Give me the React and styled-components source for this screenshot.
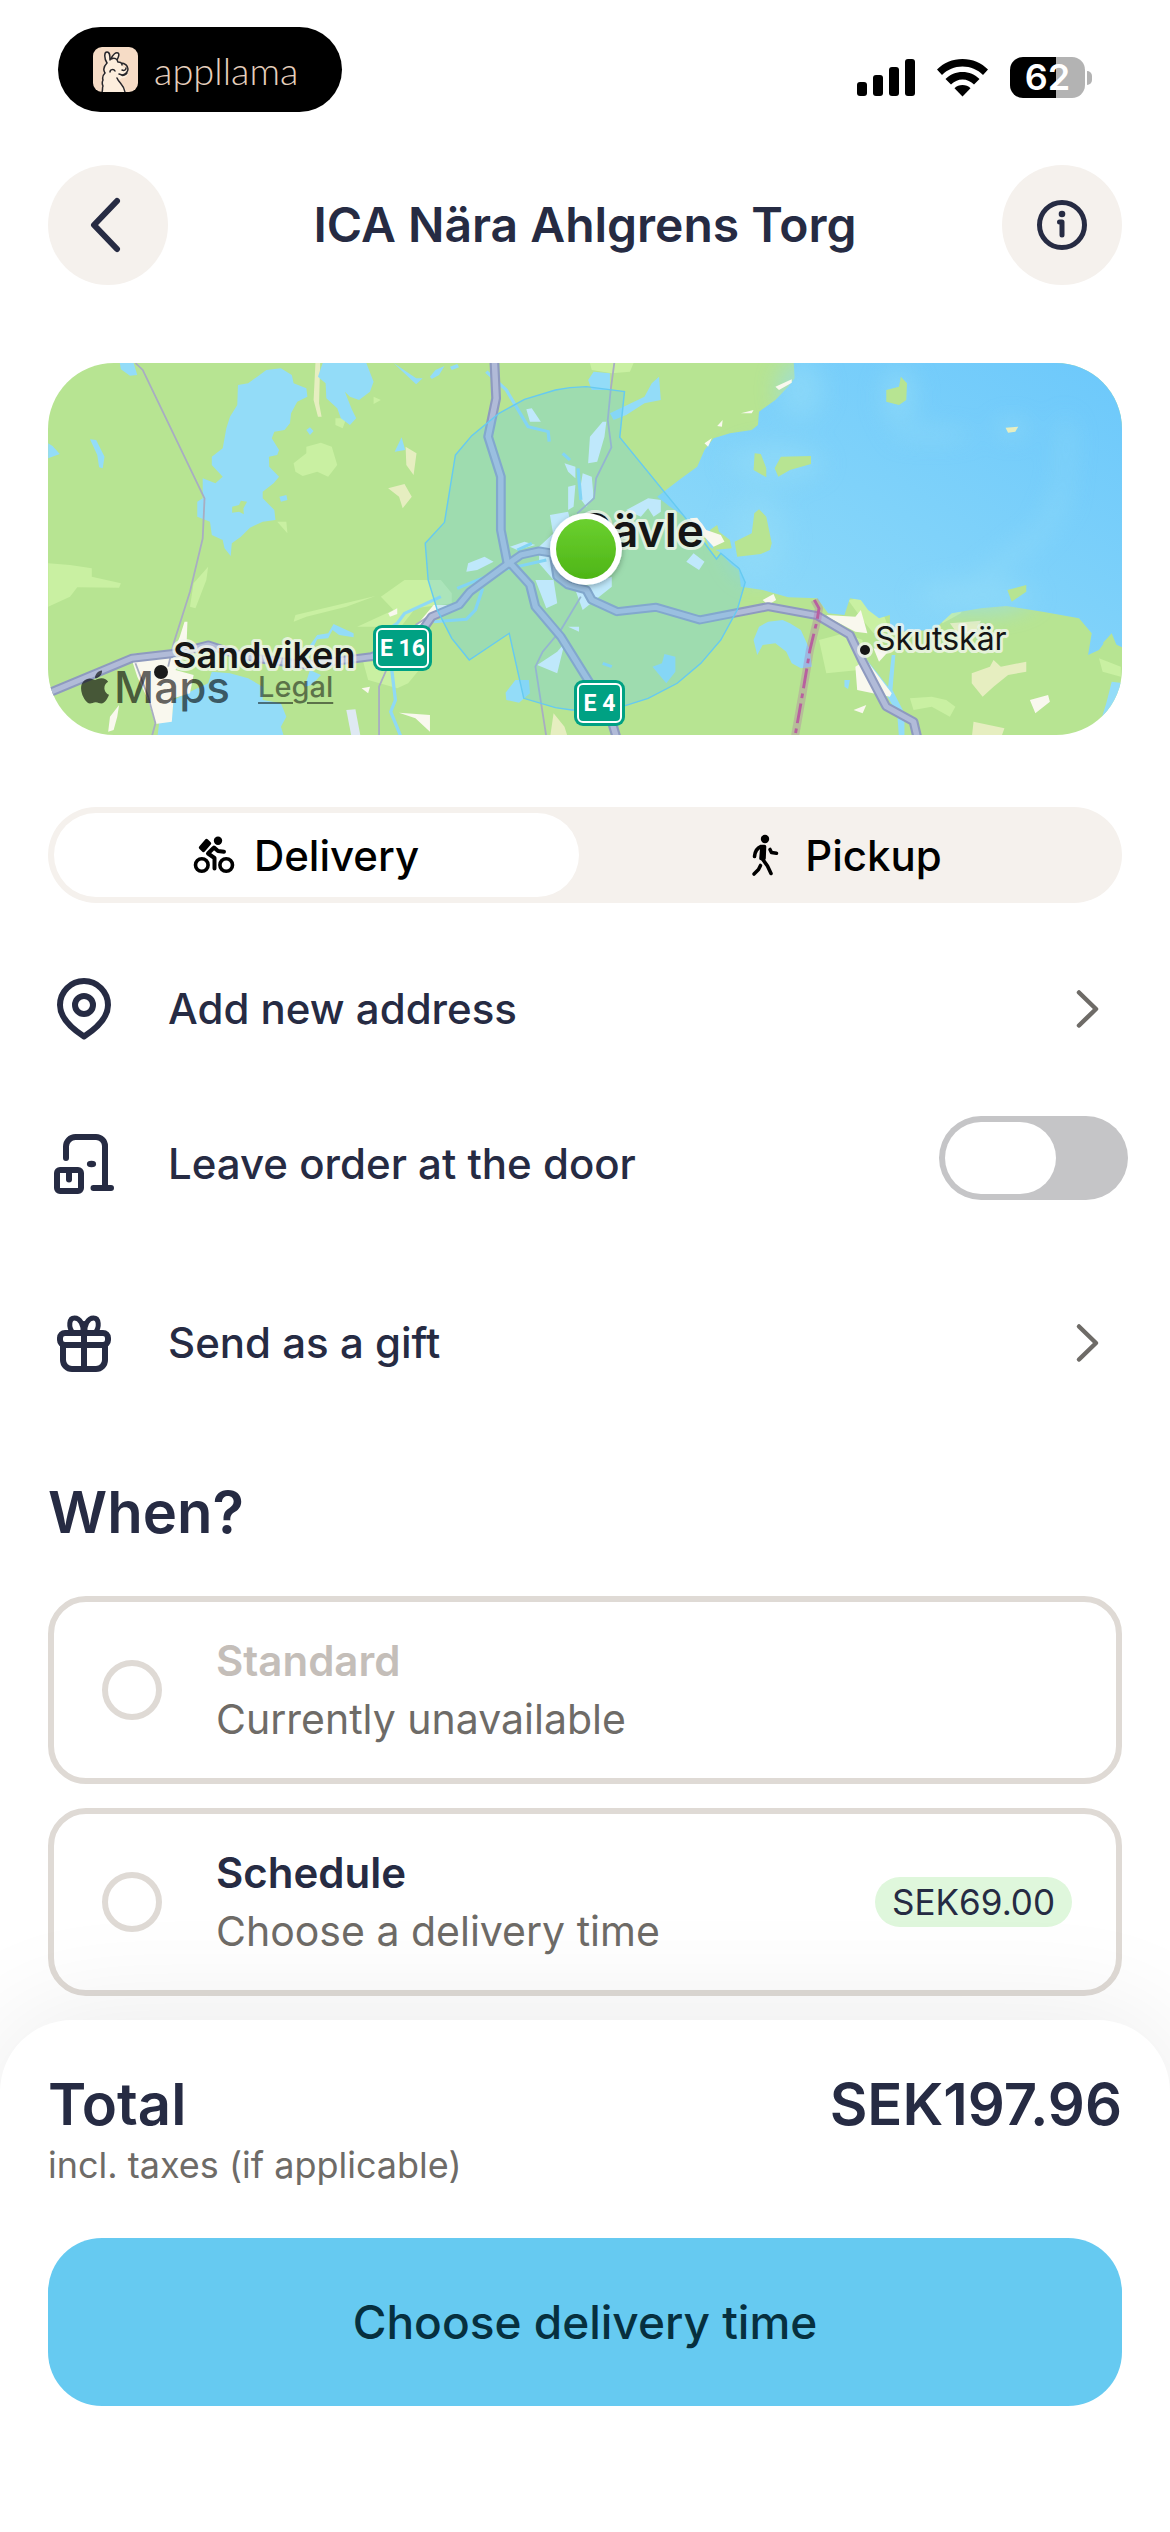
import React, { useState } from "react";
import styled, { createGlobalStyle } from "styled-components";
import { FaApple } from "react-icons/fa";

const GlobalStyles = createGlobalStyle`
  *,
  *::before,
  *::after {
    box-sizing: border-box;
  }
  body {
    margin: 0;
    background: #ffffff;
    color: #262b43;
    font-family: Inter, "Liberation Sans", sans-serif;
  }
  button,
  input {
    margin: 0;
    font: inherit;
    color: inherit;
  }
  button {
    border: none;
    padding: 0;
    background: none;
    cursor: pointer;
  }
`;

const Page = styled.div`
  min-height: 100vh;
  display: flex;
  flex-direction: column;
`;

const StatusBar = styled.div`
  display: flex;
  justify-content: space-between;
  align-items: center;
  padding: 27px 78px 0 58px;
`;

const Island = styled.div`
  display: flex;
  align-items: center;
  gap: 16px;
  width: 284px;
  height: 85px;
  padding-left: 35px;
  border-radius: 43px;
  background: #000000;
  color: #e6cfbd;
  font-family: Lato, sans-serif;
  font-weight: 300;
  font-size: 38px;
  line-height: 44px;
`;

const StatusIcons = styled.div`
  display: flex;
  align-items: center;
  gap: 22px;
  padding-top: 16px;
`;

const Battery = styled.div`
  display: flex;
  align-items: center;
  gap: 2px;
  &::after {
    content: "";
    width: 5px;
    height: 14px;
    border-radius: 0 6px 6px 0;
    background: #b3b3b3;
  }
  span {
    width: 75px;
    border-radius: 13px;
    background: linear-gradient(to right, #000000 62%, #b3b3b3 62%);
    color: white;
    font-weight: 600;
    font-size: 36px;
    line-height: 41px;
    text-align: center;
  }
`;

const Content = styled.main`
  display: flex;
  flex-direction: column;
  padding: 53px 48px 24px;
`;

const Header = styled.header`
  display: flex;
  justify-content: space-between;
  align-items: center;
  h1 {
    margin: 0;
    font-weight: 600;
    font-size: 48px;
    line-height: 60px;
  }
`;

const RoundButton = styled.button`
  display: flex;
  align-items: center;
  justify-content: center;
  width: 120px;
  height: 120px;
  border-radius: 50%;
  background: #f5f1ed;
`;

const MapCard = styled.section`
  position: relative;
  height: 372px;
  margin-top: 78px;
  border-radius: 66px;
  overflow: hidden;
  > svg {
    display: block;
    width: 100%;
    height: 100%;
  }
`;

const MapCredits = styled.div`
  position: absolute;
  left: 28px;
  bottom: 20px;
  display: flex;
  align-items: center;
  color: rgba(0, 0, 0, 0.62);
  font-weight: 500;
  font-size: 44px;
  line-height: 56px;
  a {
    margin-left: 28px;
    color: rgba(0, 0, 0, 0.5);
    font-weight: 500;
    font-size: 29px;
    text-underline-offset: 5px;
  }
`;

const Segmented = styled.div`
  display: flex;
  gap: 12px;
  margin-top: 72px;
  padding: 6px;
  border-radius: 48px;
  background: #f5f1ed;
`;

const Segment = styled.button`
  flex: 1;
  display: flex;
  align-items: center;
  justify-content: center;
  gap: 16px;
  height: 84px;
  padding-right: 24px;
  border-radius: 42px;
  background: ${(props) => (props.$active ? "#ffffff" : "transparent")};
  color: #000000;
  font-weight: 500;
  font-size: 42px;
`;

const OptionList = styled.div`
  display: flex;
  flex-direction: column;
  gap: 71px;
  padding-top: 70px;
`;

const OptionRow = styled.button`
  display: flex;
  align-items: flex-end;
  gap: 48px;
  width: 100%;
  text-align: left;
  font-weight: 500;
  font-size: 42px;
  line-height: 72px;
  svg {
    flex: none;
  }
  span {
    flex: 1;
  }
`;

const ToggleRow = styled(OptionRow)`
  margin-bottom: 36px;
  cursor: pointer;
`;

const Toggle = styled.input`
  appearance: none;
  width: 189px;
  height: 84px;
  margin-right: -6px;
  padding: 6px;
  border-radius: 42px;
  background: ${(props) => (props.checked ? "#66caf1" : "#c5c5c7")};
  cursor: pointer;
  &::before {
    content: "";
    display: block;
    width: 111px;
    height: 72px;
    margin-left: ${(props) => (props.checked ? "66px" : "0")};
    border-radius: 36px;
    background: white;
  }
`;

const SectionTitle = styled.h2`
  margin: 97px 0 48px;
  font-weight: 600;
  font-size: 58px;
  line-height: 72px;
`;

const TimeOptions = styled.div`
  display: flex;
  flex-direction: column;
  gap: 24px;
`;

const TimeCard = styled.label`
  display: flex;
  align-items: center;
  gap: 54px;
  padding: 30px 44px 30px 48px;
  border: 6px solid #dfdad5;
  border-radius: 38px;
`;

const Radio = styled.input`
  appearance: none;
  width: 60px;
  height: 60px;
  border: 6px solid #dfdad5;
  border-radius: 50%;
  background: white;
  &:checked {
    border-width: 18px;
    border-color: #66caf1;
  }
`;

const TimeText = styled.div`
  flex: 1;
  display: flex;
  flex-direction: column;
  color: #6e6b67;
  font-size: 41px;
  line-height: 58px;
  strong {
    color: ${(props) => (props.$disabled ? "#c4beb9" : "#262b43")};
    font-weight: 600;
    font-size: 42px;
  }
`;

const PriceTag = styled.span`
  padding: 0 17px;
  border-radius: 25px;
  background: #dff7dc;
  font-size: 35px;
  line-height: 50px;
`;

const Sheet = styled.footer`
  position: relative;
  flex: 1;
  padding: 48px;
  border-radius: 72px 72px 0 0;
  background: white;
  box-shadow: 0 0 120px rgba(0, 0, 0, 0.09);
`;

const TotalRow = styled.div`
  display: flex;
  justify-content: space-between;
  font-weight: 600;
  font-size: 58px;
  line-height: 72px;
`;

const TaxNote = styled.p`
  margin: 0 0 48px;
  color: #6e6b67;
  font-size: 36px;
  line-height: 50px;
`;

const PrimaryButton = styled.button`
  width: 100%;
  height: 168px;
  border-radius: 54px;
  background: #66caf1;
  color: #06303f;
  font-weight: 500;
  font-size: 46px;
`;

const Llama = () => (
  <svg width="45" height="45" viewBox="0 0 45 45" fill="none">
    <rect width="45" height="45" rx="9" fill="#f6dcc6" />
    <path
      d="M10 45V33c-1-4 0-7 2-9-2-5 0-9 2-9-3-5-2-10 0-10s3 4 3 8l3-1c1-4 3-7 5-6s0 5 0 8c4 1 4 4 5 6 3 1 5 3 5 6s-3 5-6 5l-3 2c2 4 7 7 7 12z"
      fill="#fdeedd"
    />
    <path
      d="M9 45c1-2 0-4 1-6-1-2-1-4 0-6-1-3 0-5 2-7-2-3-1-7 2-10-3-5-3-11 0-11s3 4 3 8m1-1c2-5 5-7 7-6s0 5-1 7m-6-1c4-2 6 0 7 3 2 0 4 1 4 3m-1-2c4 0 7 3 7 6s-3 6-6 6l-3-1M17 25c0-3 4-3 5-1m7-1c2 1 4 0 4-2M28 28c2 1 5 0 6-2M24 31c2 5 7 7 8 14"
      stroke="#27262b"
      strokeWidth="1.5"
      strokeLinecap="round"
    />
  </svg>
);

const Signal = () => (
  <svg width="58" height="38" viewBox="0 0 58 38">
    <rect y="23" width="10" height="14" rx="3" />
    <rect x="16" y="16" width="10" height="21" rx="3" />
    <rect x="32" y="8" width="10" height="29" rx="3" />
    <rect x="48" width="10" height="37" rx="3" />
  </svg>
);

const Wifi = () => (
  <svg width="51" height="38" viewBox="0 0 51 38">
    <path d="M25.500 0C35.500 0 44.500 4 51 10.500L46 16C40.500 10.500 33.500 7.500 25.500 7.500S10.500 10.500 5 16L0 10.500C6.500 4 15.500 0 25.500 0z" />
    <path d="M25.500 13C32 13 38 15.500 42.500 20L37 25.500C34 22.500 30 20.500 25.500 20.500S17 22.500 14 25.500L8.500 20C13 15.500 19 13 25.500 13z" />
    <path d="M25.500 26C28.500 26 31.500 27.200 33.500 29.200L25.500 37.500L17.500 29.200C19.500 27.200 22.500 26 25.500 26z" />
  </svg>
);

const BackIcon = () => (
  <svg width="36" height="60" viewBox="0 0 36 60" fill="none">
    <path
      d="M27 6L4 30l23 24"
      stroke="#262b43"
      strokeWidth="6"
      strokeLinecap="round"
      strokeLinejoin="round"
    />
  </svg>
);

const InfoIcon = () => (
  <svg width="54" height="54" viewBox="0 0 54 54" fill="none">
    <circle cx="27" cy="27" r="22.500" stroke="#262b43" strokeWidth="5" />
    <circle cx="27" cy="16" r="3.300" fill="#262b43" />
    <path
      d="M24.500 24h2.500v13"
      stroke="#262b43"
      strokeWidth="5"
      strokeLinecap="round"
      strokeLinejoin="round"
    />
  </svg>
);

const RiderIcon = () => (
  <svg width="48" height="48" viewBox="0 0 48 48" fill="none">
    <circle cx="11.800" cy="34" r="6.300" stroke="#000" strokeWidth="3.600" />
    <circle cx="36.200" cy="34" r="6.300" stroke="#000" strokeWidth="3.600" />
    <circle cx="28" cy="9.700" r="4.200" fill="#000" />
    <path
      d="M10.500 16.500l6-7 3 3-6 7z"
      fill="#000"
      stroke="#000"
      strokeWidth="3.400"
      strokeLinejoin="round"
    />
    <path
      d="M23.500 17l-5.500 5.500 6.500 4.500v10.500M24 16.500l4 3.500 6 .8"
      stroke="#000"
      strokeWidth="4"
      strokeLinecap="round"
      strokeLinejoin="round"
    />
  </svg>
);

const WalkerIcon = () => (
  <svg
    width="48"
    height="48"
    viewBox="0 0 48 48"
    fill="none"
    stroke="#000"
    strokeWidth="3.600"
    strokeLinecap="round"
    strokeLinejoin="round"
  >
    <circle cx="24" cy="8" r="4.200" fill="#000" stroke="none" />
    <path d="M21 15.500h2.500l-.500 12h-3z" fill="#000" />
    <path d="M20 15.500c-4 1.500-6 5-6.500 10" />
    <path d="M29 18.500l1.500 3 5 .800" />
    <path d="M21.500 28l5 7 3.500 7.500" />
    <path d="M19.500 34.500l-2 4-4.500 4.500" />
  </svg>
);

const LineIcon = ({ children }) => (
  <svg
    width="72"
    height="72"
    viewBox="0 0 72 72"
    fill="none"
    stroke="#262b43"
    strokeWidth="6"
    strokeLinecap="round"
    strokeLinejoin="round"
  >
    {children}
  </svg>
);

const PinIcon = () => (
  <LineIcon>
    <path d="M36 63.500C26 57 12 46 12 32a24 24 0 0 1 48 0c0 14-14 25-24 31.500z" />
    <circle cx="36" cy="32" r="9" />
  </LineIcon>
);

const DoorIcon = () => (
  <LineIcon>
    <path d="M18 30V18.500A9.500 9.500 0 0 1 27.500 9H48a9 9 0 0 1 9 9v42M45.500 60H63" />
    <rect x="9" y="42" width="24" height="21" rx="3" />
    <path d="M21 45v6.500" />
    <ellipse cx="43.500" cy="36" rx="4.600" ry="3.200" fill="#262b43" stroke="none" />
  </LineIcon>
);

const GiftIcon = () => (
  <LineIcon>
    <rect x="12" y="26" width="48" height="12" rx="5" />
    <path d="M15 39v14a9 9 0 0 0 9 9h24a9 9 0 0 0 9-9V39M36 17v45" />
    <path
      d="M35 26c1-8-3-15-8.500-15S20 20 25 26M37 26c-1-8 3-15 8.500-15S52 20 47 26"
      strokeWidth="5"
    />
  </LineIcon>
);

const ChevronIcon = () => (
  <svg width="48" height="72" viewBox="0 0 48 72" fill="none">
    <path
      d="M5 19.500l17 16.500L5 52.500"
      stroke="#6e6b67"
      strokeWidth="4.500"
      strokeLinecap="round"
      strokeLinejoin="round"
    />
  </svg>
);

const tile = "translate(-18 -13) scale(.3636 .3333)";

const highways = [
  "M1277 30L1282 145L1260 260L1295 380L1295 540L1313 640L1325 645L1375 705L1390 770L1460 860L1540 1000L1600 1115L1615 1170",
  "M40 1034L280 925L400 910L490 885L560 910L620 925L760 945L940 920L1060 870L1105 800L1180 765L1210 725L1310 645L1350 615L1400 603L1440 610L1450 680L1480 705L1530 720L1545 750L1615 785L1722 772L1842 810L2030 770L2165 797L2255 855L2290 935L2355 1070L2430 1115L2442 1170",
];

const lakes = [
  "M572 105L600 100L625 80L650 60L690 55L720 75L725 100L760 115L763 140L735 155L718 190L715 220L700 240L672 245L665 265L685 300L680 315L657 320L658 350L685 380L670 400L640 425L640 445L672 480L675 510L640 515L605 533L580 560L555 580L552 618L535 595L530 570L500 555L495 515L460 500L460 455L475 445L475 385L510 400L530 380L500 345L500 320L530 295L540 235L550 200L570 165z",
  "M805 39L925 39L945 95L935 125L905 150L880 140L866 125L885 178L897 205L880 225L855 205L845 175L815 145L813 100L792 80z",
  "M350 1165L355 1120L390 1100L395 1050L440 1025L490 1000L500 965L550 970L600 985L640 1010L640 1050L690 1060L705 1100L690 1130L700 1165z",
  "M247 39L285 39L295 75L275 77L250 58z",
  "M165 268L182 270L205 320L200 355L190 352L185 315z",
  "M50 280L62 288L82 312L50 325z",
  "M1022 262L1032 300L1003 305z",
  "M760 240L770 232L780 243L770 255z",
  "M686 440L705 435L708 450L690 455z",
  "M1000 39L1062 85L1080 85L1062 103L1015 55z",
  "M1100 80L1115 60L1140 48L1125 75L1105 87z",
  "M1155 50L1175 42L1180 52L1160 60z",
  "M755 1010L770 960L800 975L775 1005z",
  "M770 885L790 855L820 850L835 822L860 835L890 850L890 862L850 855L832 840L820 865L790 868L780 890z",
  "M1308 1028L1335 990L1372 990L1375 1030L1345 1058L1310 1050z",
  "M1535 90L1550 65L1595 70L1595 120L1545 120z",
  "M1595 190L1690 140L1710 100L1730 80L1735 150L1690 160L1640 195L1605 210z",
  "M1990 870L2005 830L2030 815L2070 810L2090 820L2120 840L2145 900L2150 950L2120 955L2095 940L2080 905L2050 880L2015 885L2000 915z",
  "M2295 920L2360 1010L2370 915L2380 915L2372 1020L2405 1090L2405 1165L2390 1165L2385 1090z",
  "M1712 950L1738 940L1745 912L1775 920L1775 965L1750 1000z",
  "M2930 1165L2960 1060L2975 995L3010 1000L3010 1165z",
  "M2240 990L2255 990L2250 1017L2240 1010z",
];

const meadows = [
  "M725 340L760 310L760 290L800 278L830 290L845 345L820 380L790 365L750 378L730 365z",
  "M50 640L110 645L170 655L170 680L250 700L245 713L130 712L110 740L50 770z",
  "M730 795L950 738L870 770L760 800L725 815z",
  "M965 740L1030 690L1130 690L1160 730L1160 760L1060 775L1020 830L900 830L1000 780z",
  "M915 930L1070 960L1040 1000L1010 1015L930 990z",
  "M450 700L490 650L485 690L455 775L440 770z",
  "M840 205L870 205L860 235L840 225z",
  "M945 140L965 150L945 162z",
  "M680 515L705 515L708 550z",
  "M2170 870L2240 850L2290 870L2280 960L2190 970z",
  "M1540 39L1660 39L1650 65L1600 70L1545 60z",
  "M2420 1045L2480 1040L2520 1050L2545 1070L2530 1100L2480 1070L2430 1080z",
  "M2250 750L2280 745L2350 800L2360 830L2320 850L2290 810z",
  "M2500 800L2590 730L2560 790L2510 820z",
  "M2940 925L3000 950L3000 980L2950 965z",
];

const fields = [
  "M785 39L798 39L795 160L802 200L792 200L780 150z",
  "M1033 290L1063 310L1055 375L1035 345z",
  "M985 415L1030 402L1050 440L1025 475L1015 440z",
  "M2590 970L2640 950L2650 930L2670 950L2740 935L2740 965L2690 975L2650 1010L2620 1040L2590 1000z",
  "M2595 1115L2680 1135L2670 1165L2590 1165z",
  "M1440 1090L1470 1130L1480 1165L1430 1165z",
  "M2530 820L2615 812L2600 850L2550 850z",
];

const towns = [
  "M275 912L395 905L412 860L425 815L433 815L430 900L400 960L450 975L440 1030L395 1045L390 1115L345 1122L325 1050L295 980z",
  "M215 1145L220 1100L245 1065L240 1100L230 1140z",
  "M1060 830L1110 765L1170 765L1110 800L1090 830z",
  "M1015 1088L1100 1095L1100 1145L1060 1105z",
  "M912 1015L935 1010L930 1030z",
  "M985 790L1010 775L1010 792L990 800z",
  "M2190 795L2270 800L2285 780L2303 850L2270 845L2200 805z",
  "M2270 950L2300 930L2370 1030L2365 1040L2275 1020z",
  "M2015 750L2045 732L2052 750L2030 765z",
  "M2320 895L2360 905L2335 935z",
  "M1815 505L1835 503L1860 540L1900 555L1910 575L1880 590L1855 560z",
  "M2750 1050L2800 1035L2805 1055L2765 1090z",
  "M2265 1080L2300 1065L2290 1090z",
  "M2050 110L2095 88L2095 98L2060 120z",
  "M1955 190L1990 180L1985 190z",
  "M1855 280L1875 265L1865 290z",
  "M1890 228L1905 210L1903 230z",
];

const suburbs = [
  "M1540 260L1575 215L1585 215L1580 260L1560 335L1535 340z",
  "M1365 178L1380 175L1405 215L1375 215z",
  "M1470 340L1500 350L1500 385L1480 365z",
  "M1520 370L1545 380L1550 440L1530 470L1510 440z",
  "M1480 410L1500 405L1495 470L1480 480z",
  "M1430 495L1480 485L1490 530L1440 560z",
  "M1205 640L1250 620L1275 635L1230 660L1200 665z",
  "M1390 690L1440 690L1450 760L1420 775z",
  "M1400 590L1440 550L1470 590L1440 690L1400 640z",
  "M1640 480L1700 445L1735 450L1735 485L1715 500L1700 475L1680 500z",
  "M1805 635L1825 610L1855 635L1840 660z",
  "M1395 945L1450 905L1470 880L1450 970z",
  "M1320 590L1360 575L1390 585L1340 600z",
  "M1500 720L1600 680L1600 710L1520 780z",
  "M1480 830L1510 830L1510 845z",
];

const seaPath =
  "M2100 30L2103 85L2085 110L2050 150L2005 185L2002 225L1985 240L1925 250L1880 265L1855 300L1835 350L1785 390L1725 440L1760 470L1800 500L1850 545L1868 590L1895 605L1930 645L1950 660L1955 710L2015 720L2085 742L2165 745L2195 790L2240 795L2255 745L2285 750L2305 780L2335 805L2365 795L2365 830L2385 845L2485 840L2535 790L2615 775L2685 768L2785 785L2885 805L2920 850L2910 915L2940 900L2960 870L3020 900L3020 30z";

const islands = [
  "M2355 120L2390 110L2395 80L2412 100L2410 150L2390 165L2355 155z",
  "M1993 310L2010 312L2025 355L2025 382L1990 360z",
  "M2048 355L2065 320L2148 318L2148 342L2090 360L2058 380z",
  "M1938 575L1985 550L1992 490L2005 478L2025 500L2040 580L2035 600L2010 612L1945 620z",
  "M2688 720L2740 705L2740 725L2700 755z",
  "M1870 540L1890 525L1895 545L1925 570L1930 595L1880 600z",
  "M2950 880L2975 850L2990 890z",
];

const zone =
  "M1485 113L1530 110L1635 125L1622 262L1800 500L1888 627L1900 610L1950 655L1967 697L1945 780L1900 870L1845 940L1780 1000L1700 1045L1635 1068L1550 1080L1490 1080L1445 1073L1358 1045L1318 850L1208 930L1160 865L1120 780L1095 690L1087 580L1140 517L1170 315L1215 257L1290 190L1360 148L1445 120z";

const Shield = ({ x, y, width, label }) => (
  <g>
    <rect x={x} y={y} width={width} height="46" rx="9" fill="#00a183" />
    <rect
      x={x + 4}
      y={y + 4}
      width={width - 8}
      height="38"
      rx="5"
      fill="none"
      stroke="#fff"
      strokeWidth="2"
    />
    <text
      x={x + width / 2}
      y={y + 31}
      fill="#fff"
      fontFamily="'Liberation Sans Narrow', Roboto, sans-serif"
      fontWeight="700"
      fontSize="23"
      textAnchor="middle"
    >
      {label}
    </text>
  </g>
);

const StoreMap = () => (
  <svg viewBox="0 0 1074 372" preserveAspectRatio="xMidYMid slice">
    <defs>
      <linearGradient id="sea" x1="0" y1="1" x2="1" y2="0">
        <stop offset="0" stopColor="#93dcf8" />
        <stop offset="0.5" stopColor="#7fd2fa" />
        <stop offset="1" stopColor="#6cc8fb" />
      </linearGradient>
      <linearGradient id="pin" x1="0" y1="0" x2="0" y2="1">
        <stop offset="0" stopColor="#6bd02f" />
        <stop offset="1" stopColor="#4eb517" />
      </linearGradient>
      <filter id="shoal" x="-100%" y="-100%" width="300%" height="300%">
        <feGaussianBlur stdDeviation="34" />
      </filter>
      <filter id="lift" x="-50%" y="-50%" width="200%" height="200%">
        <feDropShadow dx="0" dy="2" stdDeviation="3" floodOpacity="0.3" />
      </filter>
    </defs>
    <rect width="1074" height="372" fill="#b7e492" />
    <g transform={tile}>
      <path d={meadows.join("")} fill="#c9f0a2" />
      <path d={fields.join("")} fill="#e6eec0" />
      <path d={seaPath} fill="url(#sea)" />
      <g fill="#93dcf8" opacity="0.6" filter="url(#shoal)">
        <ellipse cx="2120" cy="120" rx="60" ry="90" />
        <ellipse cx="2390" cy="140" rx="45" ry="90" />
        <ellipse cx="2480" cy="255" rx="110" ry="18" />
        <ellipse cx="2700" cy="235" rx="40" ry="30" />
        <ellipse cx="2050" cy="340" rx="130" ry="60" />
        <ellipse cx="2000" cy="560" rx="80" ry="130" />
        <ellipse cx="2600" cy="740" rx="160" ry="50" />
        <path d="M2840 180L2870 250L2850 460L2790 560L2700 640L2580 740L2620 660L2780 530L2830 400z" />
      </g>
      <path d={lakes.join("")} fill="#93dcf8" />
      <path d={islands.join("")} fill="#b7e492" />
      <path d="M2683 233L2718 230L2710 245L2690 248z" fill="#e6eec0" />
      <path d="M556 470L575 465L580 452L597 455L587 475L588 493L575 485L556 488z" fill="#b7e492" />
      <path d={towns.join("")} fill="#f9f8ee" />
      <path d={suburbs.join("")} fill="#e6f5ff" />
      <path d="M870 1080L895 1078L910 1165L885 1165z" fill="#dfe9f3" />
      <g fill="none" stroke="#8fd9f5" strokeWidth="9">
        <path d="M1255 65L1310 120L1370 230L1425 245L1428 275" />
        <path d="M995 960L1005 1050L992 1085L1020 1160" />
        <path d="M970 850L1010 820L1030 790L1090 760L1130 740" />
        <path d="M1110 815L1200 808L1225 780L1245 715" />
        <path d="M1175 715L1300 660L1420 630M1340 600L1380 580" />
        <path d="M1465 310L1485 330M1507 355L1515 450M1575 940L1600 950" />
      </g>
      <g fill="none" stroke="#a8adc2" strokeWidth="5">
        <path d="M290 39L310 60L480 445L475 565L440 725L395 880L380 950" />
        <path d="M290 940L325 1040L345 1120L335 1160" />
        <path d="M1607 39L1597 120L1589 210L1599 292L1557 385L1551 445L1505 490" />
        <path d="M1515 740L1460 840L1410 905L1390 950L1420 1160" />
        <path d="M980 960L960 1010L960 1160M1060 825L1110 790" />
      </g>
      <g fill="none" strokeLinejoin="round">
        {highways.map((road) => (
          <path key={road} d={road} stroke="#8e9abf" strokeWidth="27" />
        ))}
        {highways.map((road) => (
          <path key={road} d={road} stroke="#b1bbd8" strokeWidth="15" />
        ))}
        <path
          d="M2157 750L2170 775L2165 810L2145 900L2125 1030L2103 1165"
          stroke="#b565a8"
          strokeWidth="22"
          opacity="0.3"
        />
        <path
          d="M2157 750L2170 775L2165 810L2145 900L2125 1030L2103 1165"
          stroke="#b8609f"
          strokeWidth="8"
          strokeDasharray="60 16 14 16"
        />
      </g>
      <path d={zone} fill="#66caf1" fillOpacity="0.3" stroke="#66caf1" strokeWidth="4" />
    </g>
    <g
      fill="#151515"
      stroke="#f3f6ee"
      strokeOpacity="0.8"
      strokeWidth="6"
      strokeLinejoin="round"
      paintOrder="stroke"
      fontFamily="Inter, sans-serif"
    >
      <text x="125" y="305" fontSize="36" fontWeight="600">
        Sandviken
      </text>
      <text x="656" y="184" fontSize="46" fontWeight="600" textAnchor="end">
        Gävle
      </text>
      <text x="827" y="287" fontSize="32">
        Skutskär
      </text>
      <circle cx="817" cy="287" r="5" />
    </g>
    <circle cx="113" cy="309" r="7" fill="#1a1a1a" />
    <Shield x={325} y={262} width={59} label="E 16" />
    <Shield x={526} y={317} width={51} label="E 4" />
    <g filter="url(#lift)">
      <circle cx="538" cy="186" r="36" fill="#fff" />
      <circle cx="538" cy="186" r="30" fill="url(#pin)" />
    </g>
  </svg>
);

const App = () => {
  const [mode, setMode] = useState("delivery");
  const [leaveAtDoor, setLeaveAtDoor] = useState(false);

  return (
    <Page>
      <GlobalStyles />
      <StatusBar>
        <Island>
          <Llama />
          <span>appllama</span>
        </Island>
        <StatusIcons>
          <Signal />
          <Wifi />
          <Battery>
            <span>62</span>
          </Battery>
        </StatusIcons>
      </StatusBar>
      <Content>
        <Header>
          <RoundButton aria-label="Back">
            <BackIcon />
          </RoundButton>
          <h1>ICA Nära Ahlgrens Torg</h1>
          <RoundButton aria-label="Store information">
            <InfoIcon />
          </RoundButton>
        </Header>
        <MapCard>
          <StoreMap />
          <MapCredits>
            <FaApple size={38} />
            <span>Maps</span>
            <a href="#legal">Legal</a>
          </MapCredits>
        </MapCard>
        <Segmented>
          <Segment
            $active={mode === "delivery"}
            onClick={() => setMode("delivery")}
          >
            <RiderIcon />
            Delivery
          </Segment>
          <Segment
            $active={mode === "pickup"}
            onClick={() => setMode("pickup")}
          >
            <WalkerIcon />
            Pickup
          </Segment>
        </Segmented>
        <OptionList>
          <OptionRow>
            <PinIcon />
            <span>Add new address</span>
            <ChevronIcon />
          </OptionRow>
          <ToggleRow as="label">
            <DoorIcon />
            <span>Leave order at the door</span>
            <Toggle
              type="checkbox"
              role="switch"
              checked={leaveAtDoor}
              onChange={(e) => setLeaveAtDoor(e.target.checked)}
            />
          </ToggleRow>
          <OptionRow>
            <GiftIcon />
            <span>Send as a gift</span>
            <ChevronIcon />
          </OptionRow>
        </OptionList>
        <SectionTitle>When?</SectionTitle>
        <TimeOptions>
          <TimeCard>
            <Radio type="radio" name="time" value="standard" disabled />
            <TimeText $disabled>
              <strong>Standard</strong>
              <span>Currently unavailable</span>
            </TimeText>
          </TimeCard>
          <TimeCard>
            <Radio type="radio" name="time" value="schedule" />
            <TimeText>
              <strong>Schedule</strong>
              <span>Choose a delivery time</span>
            </TimeText>
            <PriceTag>SEK69.00</PriceTag>
          </TimeCard>
        </TimeOptions>
      </Content>
      <Sheet>
        <TotalRow>
          <span>Total</span>
          <span>SEK197.96</span>
        </TotalRow>
        <TaxNote>incl. taxes (if applicable)</TaxNote>
        <PrimaryButton>Choose delivery time</PrimaryButton>
      </Sheet>
    </Page>
  );
};

export default App;
